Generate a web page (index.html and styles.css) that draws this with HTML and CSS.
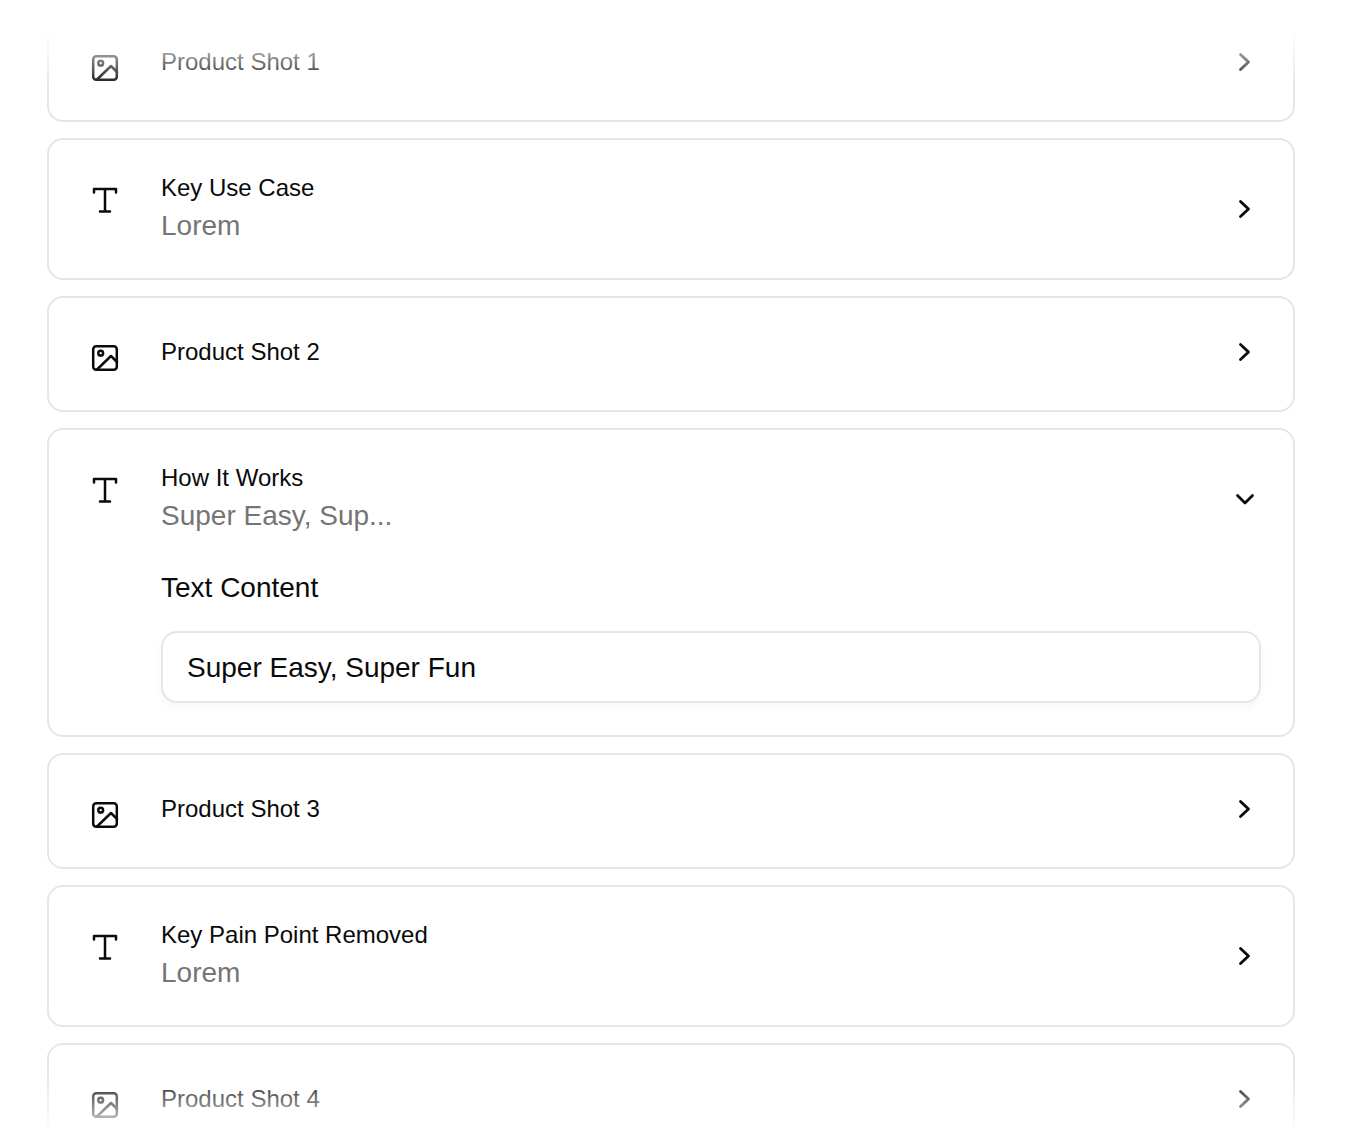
FILE: index.html
```html
<!DOCTYPE html>
<html lang="en">
<head>
    <meta charset="UTF-8">
    <meta name="viewport" content="width=device-width, initial-scale=1.0">
    <title>Sections</title>
    <link rel="stylesheet" href="styles.css">
</head>
<body>
    <svg class="defs" width="0" height="0">
        <symbol id="icon-image" viewBox="0 0 36 36">
            <rect x="6.2" y="6.2" width="23.6" height="23.6" rx="3"></rect>
            <circle cx="13.7" cy="13.2" r="2.4"></circle>
            <path d="M10 29.5 L24 16 L30 22"></path>
        </symbol>
        <symbol id="icon-text" viewBox="0 0 36 36">
            <path d="M7 10.5 V7 H29 V10.5 M18 7 V29.5 M13 29.5 H23"></path>
        </symbol>
        <symbol id="icon-right" viewBox="0 0 30 30">
            <path d="M9.5 7.5 L17.5 15 L9.5 22.5"></path>
        </symbol>
        <symbol id="icon-down" viewBox="0 0 30 30">
            <path d="M6.5 11.5 L14 19 L21.5 11.5"></path>
        </symbol>
    </svg>

    <div class="list">
        <div class="card card-image">
            <svg class="icon"><use href="#icon-image"></use></svg>
            <div class="text"><p class="title">Product Shot 1</p></div>
            <svg class="chevron"><use href="#icon-right"></use></svg>
        </div>
        <div class="card">
            <svg class="icon"><use href="#icon-text"></use></svg>
            <div class="text">
                <p class="title">Key Use Case</p>
                <p class="value">Lorem</p>
            </div>
            <svg class="chevron"><use href="#icon-right"></use></svg>
        </div>
        <div class="card card-image">
            <svg class="icon"><use href="#icon-image"></use></svg>
            <div class="text"><p class="title">Product Shot 2</p></div>
            <svg class="chevron"><use href="#icon-right"></use></svg>
        </div>
        <div class="card card-open">
            <svg class="icon"><use href="#icon-text"></use></svg>
            <div class="text">
                <p class="title">How It Works</p>
                <p class="value">Super Easy, Sup...</p>
            </div>
            <svg class="chevron"><use href="#icon-down"></use></svg>
            <div class="editor">
                <label class="editor-label" for="how">Text Content</label>
                <input class="editor-input" id="how" type="text" value="Super Easy, Super Fun">
            </div>
        </div>
        <div class="card card-image">
            <svg class="icon"><use href="#icon-image"></use></svg>
            <div class="text"><p class="title">Product Shot 3</p></div>
            <svg class="chevron"><use href="#icon-right"></use></svg>
        </div>
        <div class="card">
            <svg class="icon"><use href="#icon-text"></use></svg>
            <div class="text">
                <p class="title">Key Pain Point Removed</p>
                <p class="value">Lorem</p>
            </div>
            <svg class="chevron"><use href="#icon-right"></use></svg>
        </div>
        <div class="card card-image">
            <svg class="icon"><use href="#icon-image"></use></svg>
            <div class="text"><p class="title">Product Shot 4</p></div>
            <svg class="chevron"><use href="#icon-right"></use></svg>
        </div>
    </div>
</body>
</html>
```

FILE: styles.css
```css
* {
    box-sizing: border-box;
    margin: 0;
    padding: 0;
}

body {
    background-color: #fff;
    color: #0a0a0a;
    font-family: "Liberation Sans", Arial, sans-serif;
}

.defs {
    display: block;
}

/* scroll area, fades out at both ends */
.list {
    position: relative;
    display: flex;
    flex-direction: column;
    gap: 16px;
    height: 1128px;
    padding: 6px 68px 0 47px;
    overflow: hidden;
}

.list::before,
.list::after {
    content: "";
    position: absolute;
    left: 0;
    right: 0;
    z-index: 1;
}

.list::before {
    top: 0;
    height: 88px;
    background: linear-gradient(to bottom, #fff 30px, rgba(255, 255, 255, 0));
}

.list::after {
    bottom: 0;
    height: 56px;
    background: linear-gradient(to top, rgba(255, 255, 255, 0.85), rgba(255, 255, 255, 0));
}

.card {
    display: grid;
    grid-template-columns: 36px 1fr 30px;
    column-gap: 38px;
    flex-shrink: 0;
    padding: 30px 32px 30px 38px;
    border: 2px solid #e6e6e6;
    border-radius: 16px;
    background-color: #fff;
}

.card-image {
    padding-bottom: 34px;
}

.card-open {
    padding-bottom: 32px;
}

.icon {
    width: 36px;
    height: 36px;
    margin-top: 12px;
    fill: none;
    stroke: #0a0a0a;
    stroke-width: 2.5;
    stroke-linecap: round;
    stroke-linejoin: round;
}

.chevron {
    width: 30px;
    height: 30px;
    align-self: center;
    fill: none;
    stroke: #0a0a0a;
    stroke-width: 2.8;
    stroke-linecap: round;
    stroke-linejoin: round;
}

.title {
    font-size: 24px;
    line-height: 36px;
}

.card-image .title {
    line-height: 48px;
}

.value {
    margin-bottom: 2px;
    font-size: 28px;
    line-height: 40px;
    color: #757575;
}

.editor {
    grid-column: 2 / 4;
    display: flex;
    flex-direction: column;
    gap: 23px;
    padding-top: 30px;
}

.editor-label {
    font-size: 28px;
    line-height: 40px;
}

.editor-input {
    height: 72px;
    padding: 2px 24px 0;
    border: 2px solid #e6e6e6;
    border-radius: 16px;
    background-color: #fff;
    box-shadow: 0 4px 8px rgba(0, 0, 0, 0.04);
    color: #0a0a0a;
    font-family: inherit;
    font-size: 28px;
}
```
